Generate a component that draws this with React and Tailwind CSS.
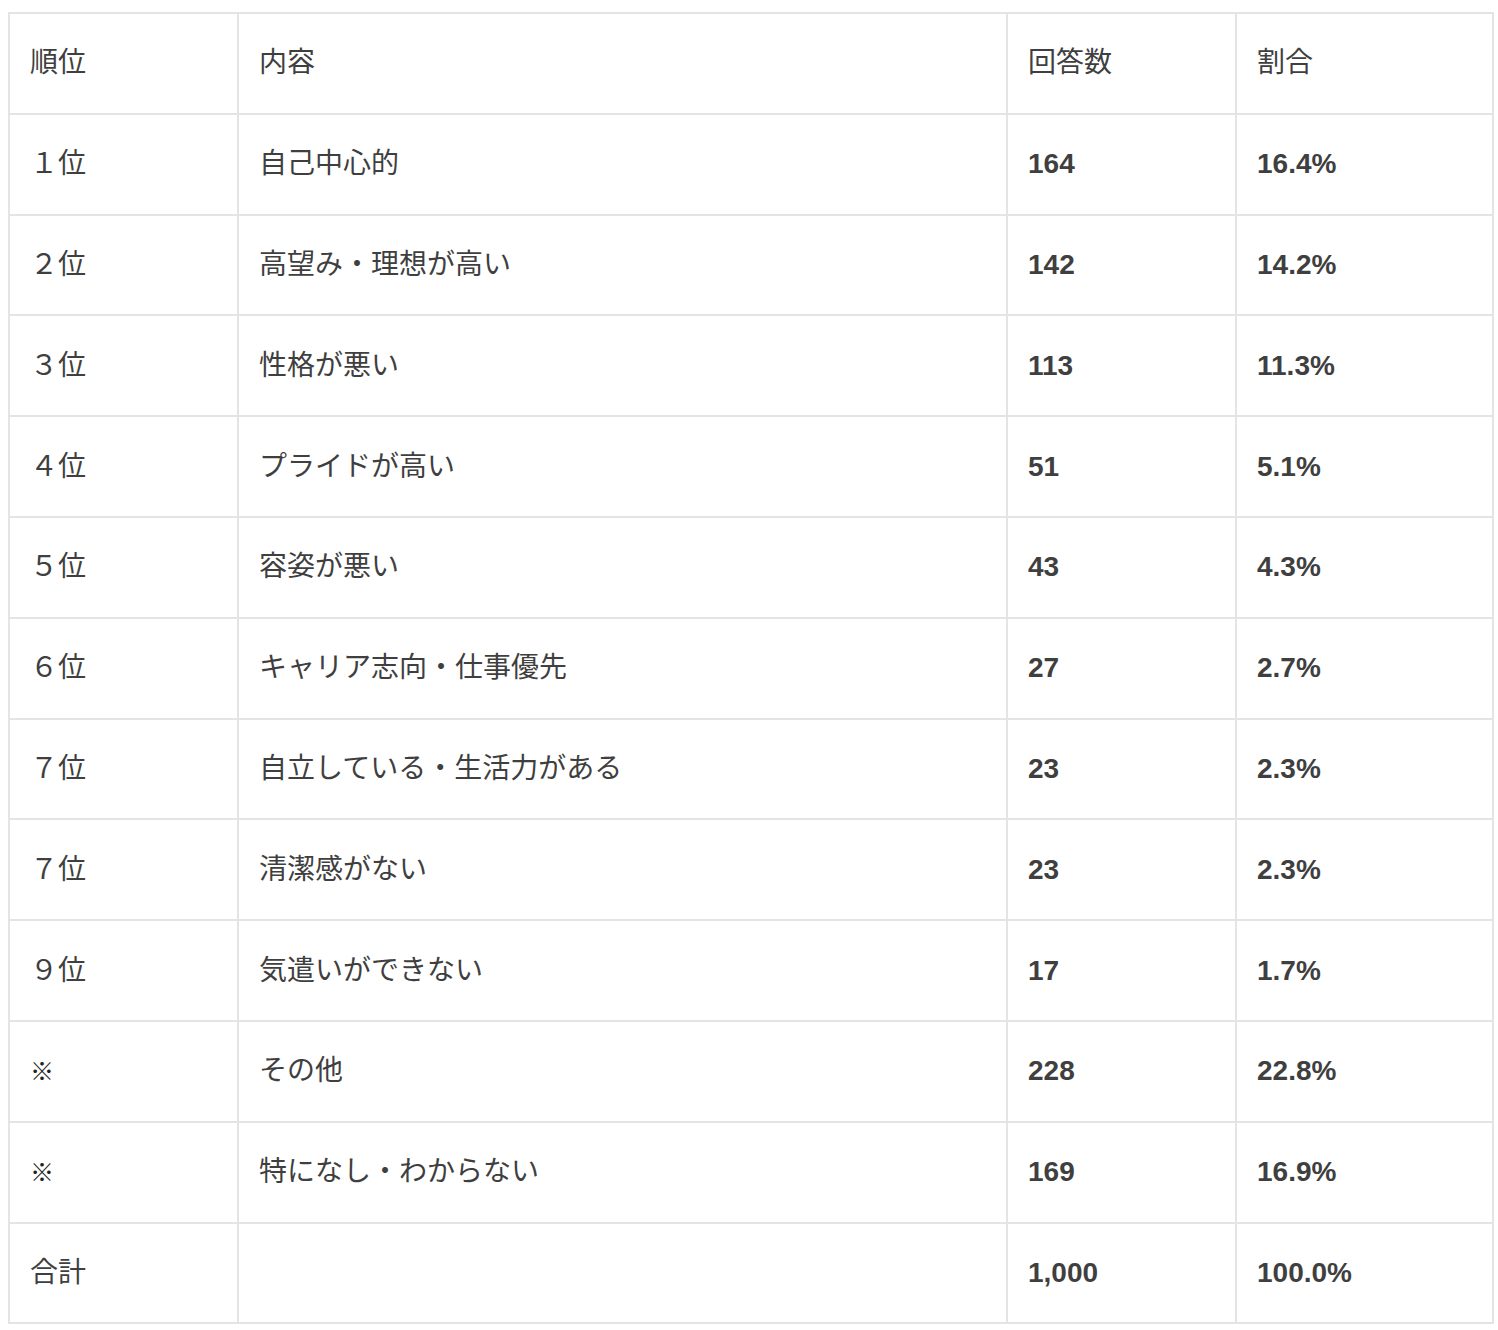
import React from 'react';

const rows = [
    { rank: '１位', label: '自己中心的', count: '164', rate: '16.4%' },
    { rank: '２位', label: '高望み・理想が高い', count: '142', rate: '14.2%' },
    { rank: '３位', label: '性格が悪い', count: '113', rate: '11.3%' },
    { rank: '４位', label: 'プライドが高い', count: '51', rate: '5.1%' },
    { rank: '５位', label: '容姿が悪い', count: '43', rate: '4.3%' },
    { rank: '６位', label: 'キャリア志向・仕事優先', count: '27', rate: '2.7%' },
    { rank: '７位', label: '自立している・生活力がある', count: '23', rate: '2.3%' },
    { rank: '７位', label: '清潔感がない', count: '23', rate: '2.3%' },
    { rank: '９位', label: '気遣いができない', count: '17', rate: '1.7%' },
    { rank: '※', label: 'その他', count: '228', rate: '22.8%', mark: true },
    { rank: '※', label: '特になし・わからない', count: '169', rate: '16.9%', mark: true },
];

const cell = 'border-2 border-[#e4e4e4] h-[100.8px] pl-[20px] align-middle';

const App = () => {
    return (
        <div className="bg-white min-h-[1330px] pt-[12px] pl-[8px] font-['Liberation_Sans','Noto_Sans_CJK_JP',sans-serif] text-[#3f3f3f]">
            <table className="border-collapse w-[1484px] table-fixed text-[28px]">
                <colgroup>
                    <col className="w-[229px]" />
                    <col className="w-[769px]" />
                    <col className="w-[229px]" />
                    <col className="w-[257px]" />
                </colgroup>
                <thead>
                    <tr>
                        <th className={`${cell} text-left font-normal`}>順位</th>
                        <th className={`${cell} text-left font-normal`}>内容</th>
                        <th className={`${cell} text-left font-normal`}>回答数</th>
                        <th className={`${cell} text-left font-normal`}>割合</th>
                    </tr>
                </thead>
                <tbody>
                    {rows.map((r, i) => (
                        <tr key={i}>
                            <td className={cell}>
                                {r.mark ? <span className="text-[24px] font-black text-[#222]">{r.rank}</span> : r.rank}
                            </td>
                            <td className={cell}>{r.label}</td>
                            <td className={`${cell} font-bold`}>{r.count}</td>
                            <td className={`${cell} font-bold`}>{r.rate}</td>
                        </tr>
                    ))}
                    <tr>
                        <td className={cell}>合計</td>
                        <td className={cell}></td>
                        <td className={`${cell} font-bold`}>1,000</td>
                        <td className={`${cell} font-bold`}>100.0%</td>
                    </tr>
                </tbody>
            </table>
        </div>
    );
};

export default App;
